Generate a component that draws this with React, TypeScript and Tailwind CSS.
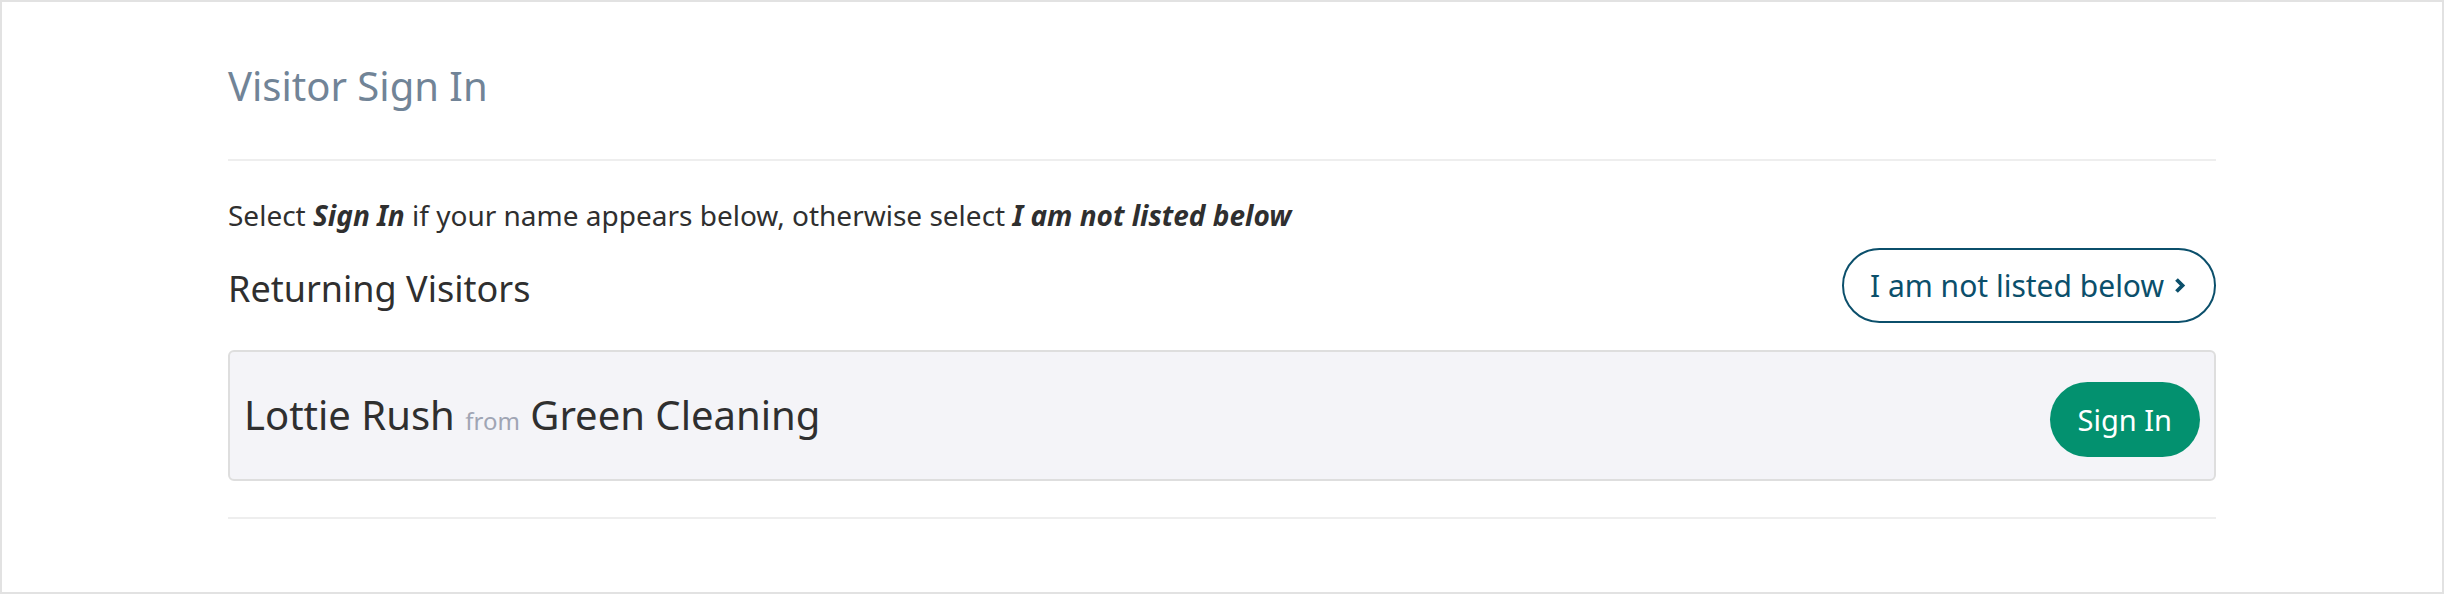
const font = { fontFamily: '"Noto Sans", "Open Sans", sans-serif' }

function Chevron() {
  return (
    <svg width="12" height="17" viewBox="0 0 12 17" fill="none" aria-hidden="true">
      <polyline
        points="2.5,2.5 8.5,8.5 2.5,14.5"
        stroke="currentColor"
        strokeWidth="3.8"
        strokeLinejoin="miter"
        strokeLinecap="butt"
      />
    </svg>
  )
}

function VisitorRow({ name, company }: { name: string; company: string }) {
  return (
    <div className="flex h-[131px] items-center justify-between rounded-[6px] border-2 border-[#dedede] bg-[#f4f4f8] pl-[14px] pr-[14px]">
      <p className="mt-[4px] text-[40px] leading-[54px] text-[#2f2f2f]">
        {name} <span className="text-[24px] text-[#a0a5b4]">from</span> {company}
      </p>
      <button
        type="button"
        className="mt-[8px] h-[75px] rounded-full bg-[#03916f] px-[28px] text-[29px] text-white"
      >
        Sign In
      </button>
    </div>
  )
}

export default function App() {
  return (
    <div
      style={font}
      className="h-[594px] w-full border-2 border-[#e2e2e2] bg-white px-[226px] pt-[60px]"
    >
      <h1 className="text-[40px] leading-[48px] font-normal text-[#718497]">Visitor Sign In</h1>
      <div className="mt-[49px] h-[2px] bg-[#eeeeee]" />

      <p className="mt-[35px] text-[28px] leading-[39px] text-[#2f2f2f]">
        Select <b className="italic">Sign In</b> if your name appears below, otherwise select{' '}
        <b className="italic">I am not listed below</b>
      </p>

      <div className="mt-[13px] flex items-center justify-between">
        <h2 className="mt-[6px] text-[36px] leading-[46px] text-[#2f2f2f]">Returning Visitors</h2>
        <button
          type="button"
          className="flex h-[75px] items-center gap-[10px] rounded-full border-2 border-[#0b4f6b] pl-[26px] pr-[28px] text-[30px] text-[#0b4f6b]"
        >
          I am not listed below
          <Chevron />
        </button>
      </div>

      <div className="mt-[27px]">
        <VisitorRow name="Lottie Rush" company="Green Cleaning" />
      </div>

      <div className="mt-[36px] h-[2px] bg-[#eeeeee]" />
    </div>
  )
}
